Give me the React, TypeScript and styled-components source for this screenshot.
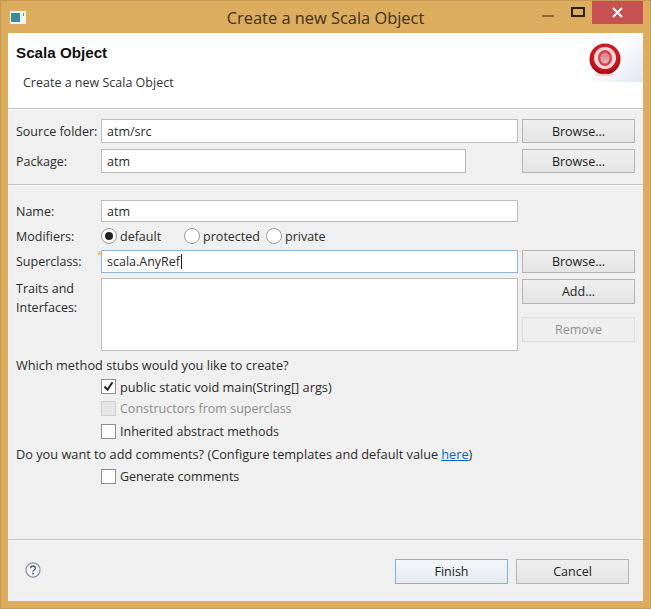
import React from "react";
import styled, { createGlobalStyle } from "styled-components";

const GlobalStyle = createGlobalStyle`
  html, body {
    margin: 0;
    padding: 0;
    background: #dcac5f;
  }
`;

const Window = styled.div`
  width: 651px;
  height: 609px;
  box-sizing: border-box;
  display: flex;
  flex-direction: column;
  background: #dcac5f;
  border: 1px solid #c69a54;
  font-family: "Open Sans", "Noto Sans", sans-serif;
  font-size: 12.5px;
  color: #2b2b2b;
  overflow: hidden;
`;

const TitleBar = styled.div`
  height: 32px;
  flex: none;
  display: grid;
  grid-template-columns: 1fr auto 1fr;
`;

const AppIcon = styled.svg`
  width: 16px;
  height: 13px;
  margin: 10px 0 0 9px;
`;

const Title = styled.div`
  font-size: 16.4px;
  line-height: 34px;
  color: #40311a;
`;

const Controls = styled.div`
  display: flex;
  justify-content: flex-end;
  align-items: flex-start;
`;

const Minimize = styled.div`
  width: 12px;
  height: 2px;
  margin: 14px 17px 0 0;
  background: #8a6a32;
`;

const Maximize = styled.div`
  width: 10px;
  height: 6px;
  margin: 6px 7px 0 0;
  border: 2px solid #2c2110;
`;

const Close = styled.div`
  width: 51px;
  height: 23px;
  margin-right: 7px;
  background: #c75050;
  display: flex;
  align-items: center;
  justify-content: center;
`;

const Client = styled.div`
  flex: 1;
  margin: 0 7px 7px;
  display: flex;
  flex-direction: column;
  background: #f0f0f0;
  box-shadow: inset 1px 0 #f4f4fb, inset 0 -5px #f1f1f8;
`;

const Header = styled.div`
  height: 75px;
  flex: none;
  box-sizing: border-box;
  display: flex;
  justify-content: space-between;
  background:
    linear-gradient(135deg, #ffffff 0 50%, #e0e6f2 100%) right top / 70px 49px no-repeat,
    #ffffff;
`;

const HeaderText = styled.div`
  padding: 11px 0 0 8px;
`;

const HeaderTitle = styled.div`
  font-family: "Liberation Sans", Arial, sans-serif;
  font-weight: 700;
  font-size: 15.2px;
  line-height: 17px;
  color: #111;
`;

const HeaderSub = styled.div`
  margin: 13px 0 0 7px;
  font-size: 12.5px;
  line-height: 17px;
  color: #333;
`;

const Logo = styled.svg`
  width: 34px;
  height: 36px;
  margin: 9px 21px 0 0;
`;

const Rule = styled.div<{ $top: number; $bottom: number }>`
  flex: none;
  height: 1px;
  margin: ${(p) => p.$top}px 0 ${(p) => p.$bottom}px;
  background: #c4c4c4;
  border-bottom: 1px solid #f8f8f8;
`;

const Form = styled.div`
  padding: 0 8px;
`;

const Row = styled.div<{ $h: number; $mt?: number; $wide?: boolean }>`
  display: flex;
  align-items: center;
  height: ${(p) => p.$h}px;
  margin-top: ${(p) => p.$mt ?? 0}px;
  font-size: ${(p) => (p.$wide ? "12.75px" : "inherit")};
`;

const FieldLabel = styled.div`
  width: 85px;
  flex: none;
`;

const TopLabel = styled(FieldLabel)`
  align-self: flex-start;
  padding-top: 1px;
  line-height: 19px;
`;

const Field = styled.div<{ $w?: number; $focus?: boolean; $tall?: boolean }>`
  position: relative;
  box-sizing: border-box;
  width: ${(p) => p.$w ?? 417}px;
  height: 100%;
  flex: none;
  padding: ${(p) => (p.$tall ? "0" : "0 0 0 5px")};
  display: flex;
  align-items: center;
  background: #fff;
  border: 1px solid ${(p) => (p.$focus ? "#8fb6d8" : "#bdbdbd")};
`;

const Caret = styled.span`
  display: inline-block;
  width: 1px;
  height: 15px;
  margin-left: 1px;
  background: #222;
`;

const Marker = styled.span`
  position: absolute;
  left: -5px;
  top: -1px;
  font-size: 9px;
  line-height: 9px;
  font-weight: 700;
  color: #e6bd7a;
`;

const Button = styled.div<{ $muted?: boolean; $w?: number; $default?: boolean }>`
  box-sizing: border-box;
  width: ${(p) => p.$w ?? 113}px;
  height: 100%;
  flex: none;
  display: flex;
  align-items: center;
  justify-content: center;
  background: ${(p) =>
    p.$muted ? "#efefef" : p.$default ? "linear-gradient(#f4f7fa, #e6eaee)" : "linear-gradient(#f0f0f0, #e4e4e4)"};
  border: 1px solid ${(p) => (p.$muted ? "#dedede" : p.$default ? "#7fb0de" : "#b4b4b4")};
  color: ${(p) => (p.$muted ? "#8f8f8f" : "#222")};
`;

const SideButton = styled(Button)`
  margin-left: auto;
`;

const Side = styled.div`
  margin-left: 4px;
  width: 113px;
  height: 100%;
  flex: none;
`;

const StackedSide = styled(Side)`
  display: flex;
  flex-direction: column;
  gap: 13px;
  padding-top: 1px;
`;

const SmallButton = styled(Button)`
  height: 25px;
`;

const RadioCircle = styled.span<{ $on?: boolean; $gap?: number }>`
  box-sizing: border-box;
  width: 16px;
  height: 16px;
  flex: none;
  margin-right: 3px;
  margin-left: ${(p) => p.$gap ?? 0}px;
  border-radius: 50%;
  background: #fff;
  border: 1px solid #9a9a9a;
  display: flex;
  align-items: center;
  justify-content: center;

  &::after {
    content: "";
    width: 8px;
    height: 8px;
    border-radius: 50%;
    background: ${(p) => (p.$on ? "#222" : "transparent")};
  }
`;

const Check = styled.span<{ $off?: boolean }>`
  box-sizing: border-box;
  width: 15px;
  height: 15px;
  flex: none;
  margin: 0 4px 0 85px;
  background: ${(p) => (p.$off ? "#e6e6e6" : "#fff")};
  border: 1px solid ${(p) => (p.$off ? "#cfcfcf" : "#8f8f8f")};
  display: flex;
  align-items: center;
  justify-content: center;
`;

const Muted = styled.span`
  color: #8d8d8d;
`;

const Link = styled.a`
  color: #0066cc;
  text-decoration: underline;
  margin-left: 3px;
`;

const Spacer = styled.div`
  flex: 1;
`;

const Footer = styled.div`
  height: 25px;
  display: flex;
  align-items: center;
  padding: 0 14px 0 17px;
  margin-bottom: 17px;
`;

const HelpIcon = styled.svg`
  width: 16px;
  height: 16px;
  margin-top: -3px;
`;

const FooterButtons = styled.div`
  margin-left: auto;
  height: 100%;
  display: flex;
  gap: 8px;
`;

export default function App() {
  return (
    <Window>
      <GlobalStyle />
      <TitleBar>
        <AppIcon viewBox="0 0 16 13">
          <rect width="16" height="13" fill="#f2f4f4" />
          <rect x="1" y="2" width="9" height="9" fill="#3f8a9a" />
          <rect x="13" y="2" width="1" height="3" fill="#6f8a9a" />
        </AppIcon>
        <Title>Create a new Scala Object</Title>
        <Controls>
          <Minimize />
          <Maximize />
          <Close>
            <svg width="11" height="11" viewBox="0 0 11 11">
              <path d="M1 1l9 9M10 1l-9 9" stroke="#fff" strokeWidth="2" />
            </svg>
          </Close>
        </Controls>
      </TitleBar>
      <Client>
        <Header>
          <HeaderText>
            <HeaderTitle>Scala Object</HeaderTitle>
            <HeaderSub>Create a new Scala Object</HeaderSub>
          </HeaderText>
          <Logo viewBox="0 0 34 36">
            <defs>
              <radialGradient id="ball" cx="50%" cy="40%" r="60%">
                <stop offset="0%" stopColor="#e2333c" />
                <stop offset="75%" stopColor="#c9141e" />
                <stop offset="100%" stopColor="#8e0a12" />
              </radialGradient>
              <linearGradient id="core" x1="0" y1="0" x2="0" y2="1">
                <stop offset="0%" stopColor="#cf8088" />
                <stop offset="100%" stopColor="#eeb4b8" />
              </linearGradient>
            </defs>
            <circle cx="17" cy="17" r="15.5" fill="url(#ball)" />
            <circle cx="17" cy="16" r="11" fill="#f2d8da" />
            <ellipse cx="17" cy="16" rx="7" ry="8" fill="#d8414a" />
            <ellipse cx="17" cy="16" rx="4.6" ry="5.6" fill="url(#core)" />
            <ellipse cx="17" cy="33" rx="11" ry="1.5" fill="#f0c8c8" opacity="0.6" />
          </Logo>
        </Header>
        <Rule $top={0} $bottom={9} />
        <Form>
          <Row $h={24}>
            <FieldLabel>Source folder:</FieldLabel>
            <Field>atm/src</Field>
            <Side>
              <SideButton>Browse...</SideButton>
            </Side>
          </Row>
          <Row $h={24} $mt={6}>
            <FieldLabel>Package:</FieldLabel>
            <Field $w={365}>atm</Field>
            <SideButton>Browse...</SideButton>
          </Row>
        </Form>
        <Rule $top={11} $bottom={14} />
        <Form>
          <Row $h={22}>
            <FieldLabel>Name:</FieldLabel>
            <Field>atm</Field>
          </Row>
          <Row $h={28}>
            <FieldLabel>Modifiers:</FieldLabel>
            <RadioCircle $on />
            default
            <RadioCircle $gap={23} />
            protected
            <RadioCircle $gap={6} />
            private
          </Row>
          <Row $h={23}>
            <FieldLabel>Superclass:</FieldLabel>
            <Field $focus>
              <Marker>*</Marker>
              scala.AnyRef
              <Caret />
            </Field>
            <Side>
              <SideButton>Browse...</SideButton>
            </Side>
          </Row>
          <Row $h={73} $mt={5}>
            <TopLabel>
              Traits and
              <br />
              Interfaces:
            </TopLabel>
            <Field $tall />
            <StackedSide>
              <SmallButton>Add...</SmallButton>
              <SmallButton $muted>Remove</SmallButton>
            </StackedSide>
          </Row>
          <Row $h={22} $mt={3} $wide>Which method stubs would you like to create?</Row>
          <Row $h={21} $wide>
            <Check>
              <svg width="11" height="11" viewBox="0 0 11 11">
                <path d="M1.5 5.5l3 3.2 5-7.5" fill="none" stroke="#222" strokeWidth="2" />
              </svg>
            </Check>
            public static void main(String[] args)
          </Row>
          <Row $h={23}>
            <Check $off />
            <Muted>Constructors from superclass</Muted>
          </Row>
          <Row $h={22}>
            <Check />
            Inherited abstract methods
          </Row>
          <Row $h={23} $wide>
            Do you want to add comments? (Configure templates and default value
            <Link>here</Link>)
          </Row>
          <Row $h={22}>
            <Check />
            Generate comments
          </Row>
        </Form>
        <Spacer />
        <Rule $top={0} $bottom={18} />
        <Footer>
          <HelpIcon viewBox="0 0 17 17">
            <circle cx="8.5" cy="8.5" r="7.5" fill="#f4f4f6" stroke="#8d93a3" strokeWidth="1.3" />
            <path d="M6 6.6c0-3.2 5-3.2 5 0 0 2-2.5 1.8-2.5 3.8" fill="none" stroke="#5a6072" strokeWidth="1.6" />
            <rect x="7.6" y="11.5" width="1.8" height="1.8" fill="#5a6072" />
          </HelpIcon>
          <FooterButtons>
            <Button $default>Finish</Button>
            <Button>Cancel</Button>
          </FooterButtons>
        </Footer>
      </Client>
    </Window>
  );
}
